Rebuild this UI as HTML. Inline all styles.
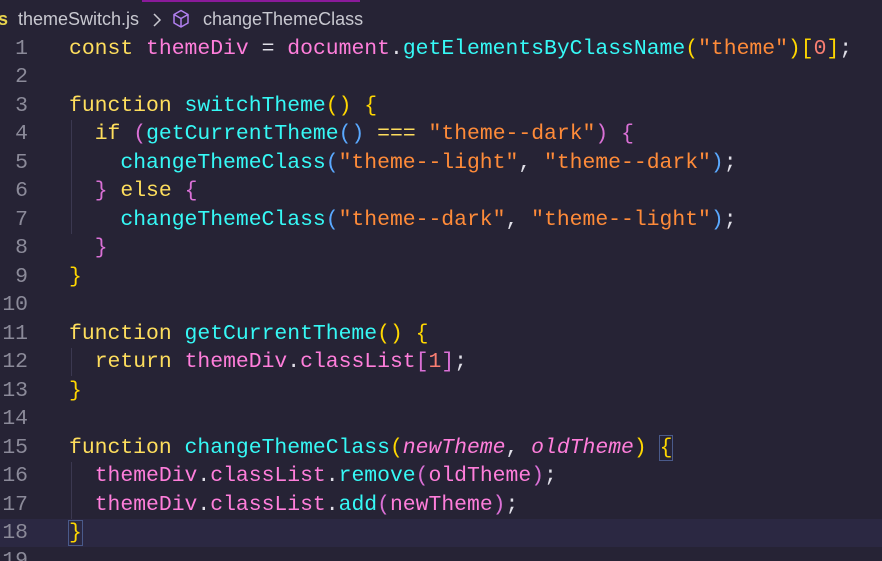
<!DOCTYPE html>
<html style="height:561px;overflow:hidden"><head><style>
body{margin:0;width:882px;height:561px;overflow:hidden;background:#262335;font-family:"Liberation Mono",monospace;position:relative;}
.bc{position:absolute;top:9px;left:0;height:26px;font-family:"Liberation Sans",sans-serif;font-size:18px;color:#c8c8d0;white-space:nowrap;}
.topbar{position:absolute;top:0;left:142px;width:218px;height:2px;background:#8a1a9a;}
.code{position:absolute;top:35px;left:0;width:882px;font-size:21.4px;}
.ln{position:relative;height:28.47px;line-height:28.47px;white-space:pre;}
.n{position:absolute;left:0;width:28px;text-align:right;color:#8b8a99;}
.t{position:absolute;left:69px;}
.k{color:#fede5d}.v{color:#ff7edb}.f{color:#36f9f6}.s{color:#ff8b39}.num{color:#f97e72}
.b1{color:#ffd700}.b2{color:#da70d6}.b3{color:#5aa9ff}.p{color:#e0dfe8}.i{color:#ff7edb;font-style:italic}
.cur{background:#2b2842;}
.guide{position:absolute;left:71px;width:1px;background:#3b3850;}
</style></head><body>
<div class="topbar"></div>
<div class="bc"><span style="color:#e8d44d;font-weight:bold;position:absolute;left:-2px">s</span><span style="position:absolute;left:18px">themeSwitch.js</span>
<svg style="position:absolute;left:152px;top:3px" width="10" height="16" viewBox="0 0 10 16"><path d="M2 2 L8 8 L2 14" fill="none" stroke="#c8c8d0" stroke-width="1.5"/></svg>
<svg style="position:absolute;left:172px;top:0px" width="18" height="20" viewBox="0 0 18 20"><path d="M9 1.5 L16 5.5 V14 L9 18 L2 14 V5.5 Z M2 5.5 L9 9.5 L16 5.5 M9 9.5 V18" fill="none" stroke="#b180f0" stroke-width="1.5" stroke-linejoin="round"/></svg>
<span style="position:absolute;left:203px">changeThemeClass</span></div>
<div class="code">
<div class="guide" style="top:85px;height:114px"></div>
<div class="guide" style="top:313px;height:28px"></div>
<div class="guide" style="top:427px;height:57px"></div>
<div class="ln"><span class="n">1</span><span class="t"><span class="k">const</span> <span class="v">themeDiv</span> <span class="p">=</span> <span class="v">document</span><span class="p">.</span><span class="f">getElementsByClassName</span><span class="b1">(</span><span class="s">"theme"</span><span class="b1">)[</span><span class="num">0</span><span class="b1">]</span><span class="p">;</span></span></div>
<div class="ln"><span class="n">2</span></div>
<div class="ln"><span class="n">3</span><span class="t"><span class="k">function</span> <span class="f">switchTheme</span><span class="b1">()</span> <span class="b1">{</span></span></div>
<div class="ln"><span class="n">4</span><span class="t">  <span class="k">if</span> <span class="b2">(</span><span class="f">getCurrentTheme</span><span class="b3">()</span> <span class="k">===</span> <span class="s">"theme--dark"</span><span class="b2">)</span> <span class="b2">{</span></span></div>
<div class="ln"><span class="n">5</span><span class="t">    <span class="f">changeThemeClass</span><span class="b3">(</span><span class="s">"theme--light"</span><span class="p">,</span> <span class="s">"theme--dark"</span><span class="b3">)</span><span class="p">;</span></span></div>
<div class="ln"><span class="n">6</span><span class="t">  <span class="b2">}</span> <span class="k">else</span> <span class="b2">{</span></span></div>
<div class="ln"><span class="n">7</span><span class="t">    <span class="f">changeThemeClass</span><span class="b3">(</span><span class="s">"theme--dark"</span><span class="p">,</span> <span class="s">"theme--light"</span><span class="b3">)</span><span class="p">;</span></span></div>
<div class="ln"><span class="n">8</span><span class="t">  <span class="b2">}</span></span></div>
<div class="ln"><span class="n">9</span><span class="t"><span class="b1">}</span></span></div>
<div class="ln"><span class="n">10</span></div>
<div class="ln"><span class="n">11</span><span class="t"><span class="k">function</span> <span class="f">getCurrentTheme</span><span class="b1">()</span> <span class="b1">{</span></span></div>
<div class="ln"><span class="n">12</span><span class="t">  <span class="k">return</span> <span class="v">themeDiv</span><span class="p">.</span><span class="v">classList</span><span class="b2">[</span><span class="num">1</span><span class="b2">]</span><span class="p">;</span></span></div>
<div class="ln"><span class="n">13</span><span class="t"><span class="b1">}</span></span></div>
<div class="ln"><span class="n">14</span></div>
<div class="ln"><span class="n">15</span><span class="t"><span class="k">function</span> <span class="f">changeThemeClass</span><span class="b1">(</span><span class="i">newTheme</span><span class="p">,</span> <span class="i">oldTheme</span><span class="b1">)</span> <span class="b1" style="outline:1px solid #4a5a8a">{</span></span></div>
<div class="ln"><span class="n">16</span><span class="t">  <span class="v">themeDiv</span><span class="p">.</span><span class="v">classList</span><span class="p">.</span><span class="f">remove</span><span class="b2">(</span><span class="v">oldTheme</span><span class="b2">)</span><span class="p">;</span></span></div>
<div class="ln"><span class="n">17</span><span class="t">  <span class="v">themeDiv</span><span class="p">.</span><span class="v">classList</span><span class="p">.</span><span class="f">add</span><span class="b2">(</span><span class="v">newTheme</span><span class="b2">)</span><span class="p">;</span></span></div>
<div class="ln cur"><span class="n">18</span><span class="t"><span class="b1" style="outline:1px solid #4a5a8a">}</span></span></div>
<div class="ln"><span class="n">19</span></div>
</div>
</body></html>
